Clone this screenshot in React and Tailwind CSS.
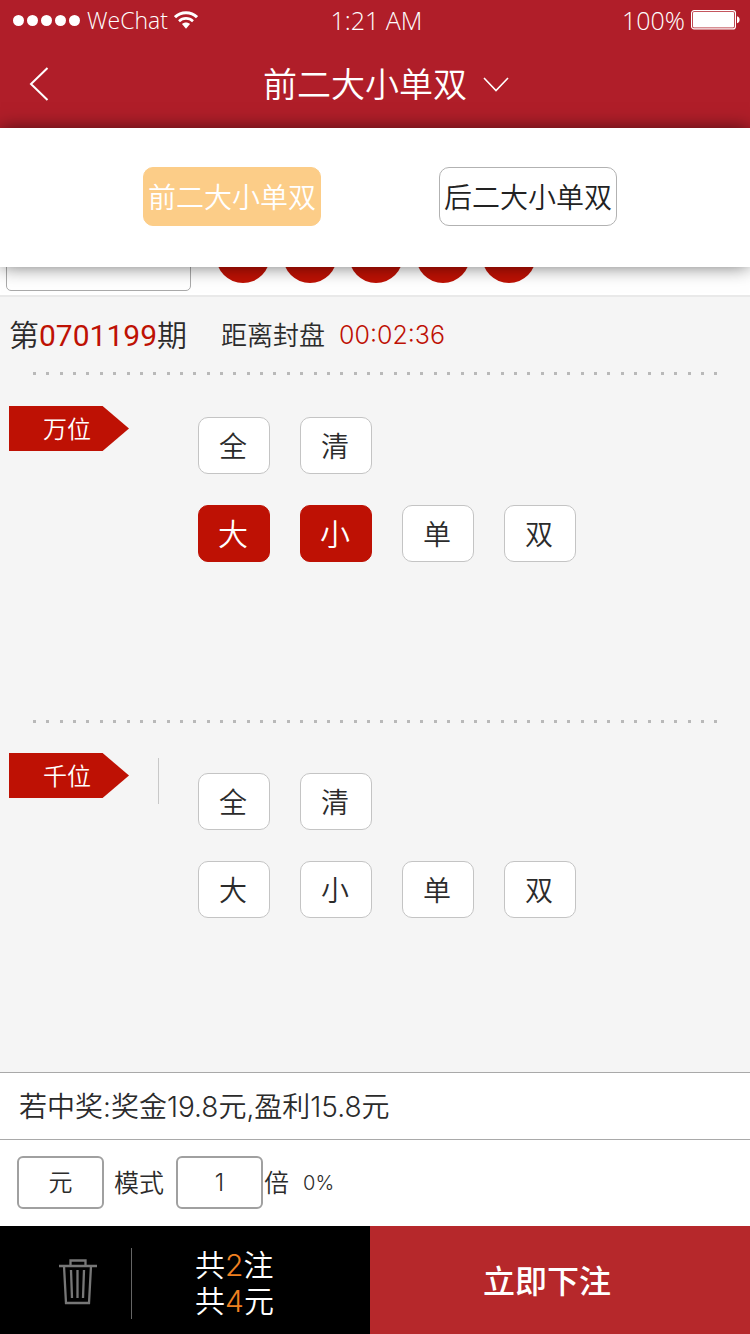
import { useState } from "react";

const SIZES = ["大", "小", "单", "双"];

function StatusBar() {
  return (
    <div className="grid grid-cols-3 items-center h-10 pl-[13px] pr-[10px] text-[25px] leading-[38px] font-['Open_Sans','Noto_Sans',sans-serif]">
      <div className="flex items-center text-[23px]">
        <span className="flex gap-[3px] mr-[7px]">
          {[0, 1, 2, 3, 4].map((i) => (
            <i key={i} className="size-[11px] rounded-full bg-white" />
          ))}
        </span>
        WeChat
        <svg className="ml-[6px] w-6 h-[18px]" viewBox="0 0 24 18" fill="none" stroke="#fff">
          <path d="M1 6.200C7 .2 17 .2 23 6.200" strokeWidth="3" />
          <path d="M5 10.200c4-3.800 10-3.800 14 0" strokeWidth="2.600" />
          <path d="M8 13c2.300-2 5.700-2 8 0l-4 4.800z" fill="#fff" stroke="none" />
        </svg>
      </div>
      <div className="text-center">1:21 AM</div>
      <div className="flex items-center justify-end">
        100%
        <svg className="ml-[6px] w-[49px] h-5" viewBox="0 0 49 20">
          <rect x=".6" y=".6" width="43.800" height="18.300" rx="2.500" fill="none" stroke="#fff" strokeWidth="1.200" />
          <rect x="2" y="2" width="41" height="15.500" rx="1" fill="#fff" />
          <path d="M46 6.200c3.500.8 3.500 6.200 0 7z" fill="#fff" />
        </svg>
      </div>
    </div>
  );
}

function ModeMenu({ value, onChange }) {
  return (
    <div className="absolute inset-x-0 top-full z-10 flex justify-center gap-[118px] bg-white pt-[39px] pb-[41px] pl-[10px] shadow-[0_0_18px_-1px_rgba(0,0,0,0.6)]">
      {["前二大小单双", "后二大小单双"].map((m) => (
        <button
          key={m}
          type="button"
          onClick={() => onChange(m)}
          className={
            "w-[178px] h-[59px] pt-0.5 rounded-[10px] border text-[28px] whitespace-nowrap " +
            (m === value
              ? "bg-[#fccd88] border-[#fccd88] text-white"
              : "bg-white border-[#b2b2b2] text-[#222]")
          }
        >
          {m}
        </button>
      ))}
    </div>
  );
}

function DottedLine() {
  return (
    <div className="flex justify-between pl-[33px] pr-8">
      {Array.from({ length: 52 }, (_, i) => (
        <i key={i} className="size-[3px] bg-[#b9b9b9]" />
      ))}
    </div>
  );
}

function Choice({ children, active, onClick }) {
  return (
    <button
      type="button"
      onClick={onClick}
      aria-pressed={active}
      className={
        "w-[72px] h-[57px] pt-0.5 pr-0.5 rounded-[10px] border " +
        (active
          ? "bg-[#be1104] border-[#be1104] text-white text-[30px]"
          : "bg-white border-[#c4c4c4] text-[#2b2b2b] text-[28px]")
      }
    >
      {children}
    </button>
  );
}

function Position({ name, picked, setPicked, divided, className }) {
  const toggle = (s) =>
    setPicked(picked.includes(s) ? picked.filter((p) => p !== s) : [...picked, s]);
  return (
    <section className={"flex items-start pl-[9px] " + className}>
      <h2 className="w-[120px] h-[45px] pl-[34px] text-2xl leading-[47px] text-white font-[350] bg-[#be1104] [clip-path:polygon(0_0,78%_0,100%_50%,78%_100%,0_100%)]">
        {name}
      </h2>
      <div className={"ml-[29px] mt-[5px] w-px h-[46px] " + (divided ? "bg-[#c8c8c8]" : "")} />
      <div className={"ml-[39px] flex flex-col gap-[31px] " + (divided ? "pt-5" : "pt-[11px]")}>
        <div className="flex gap-[30px]">
          <Choice onClick={() => setPicked(SIZES)}>全</Choice>
          <Choice onClick={() => setPicked([])}>清</Choice>
        </div>
        <div className="flex gap-[30px]">
          {SIZES.map((s) => (
            <Choice key={s} active={picked.includes(s)} onClick={() => toggle(s)}>
              {s}
            </Choice>
          ))}
        </div>
      </div>
    </section>
  );
}

export default function App() {
  const [mode, setMode] = useState("前二大小单双");
  const [first, setFirst] = useState(["大", "小"]);
  const [second, setSecond] = useState([]);

  return (
    <div className="min-h-screen flex flex-col bg-[#f5f5f5] text-[#2b2b2b] font-[350] font-['Inter','Noto_Sans_CJK_SC',sans-serif]">
      <header className="relative bg-[#b01e29] text-white">
        <StatusBar />
        <nav className="flex items-center h-[88px] pr-[26px]">
          <button type="button" aria-label="返回" className="w-12 h-full pl-[29px]">
            <svg className="w-5 h-[34px]" viewBox="0 0 20 34" fill="none" stroke="#fff" strokeWidth="2">
              <path d="M18.500 1 2 17l16.500 16" />
            </svg>
          </button>
          <button type="button" className="flex-1 flex items-center justify-center gap-4 pt-px text-[34px]">
            {mode}
            <svg className="w-[26px] h-[15px]" viewBox="0 0 26 15" fill="none" stroke="#fff" strokeWidth="1.600">
              <path d="m1 1 12 12.500L25 1" />
            </svg>
          </button>
        </nav>
        <ModeMenu value={mode} onChange={setMode} />
      </header>

      <div className="flex items-start h-[169px] pt-[27px] pl-[6px] bg-white border-b-2 border-[#e9e9e9]">
        <div className="w-[185px] h-[136px] rounded-[5px] border border-[#aaa]" />
        <div className="flex justify-between w-[345px] pt-[74px] pl-[25px]">
          {[0, 1, 2, 3, 4].map((i) => (
            <i key={i} className="size-[54px] rounded-full bg-[#be1104]" />
          ))}
        </div>
      </div>

      <main className="flex-1">
        <div className="flex items-center h-[75px] pt-0.5 pl-[9px]">
          <span className="text-[30px]">
            第<span className="font-normal text-[#be1104] font-['Roboto',sans-serif]">0701199</span>期
          </span>
          <span className="ml-[34px] text-[26px]">距离封盘</span>
          <span className="ml-[14px] text-[25px] text-[#be1104]">00:02:36</span>
        </div>
        <DottedLine />
        <Position name="万位" picked={first} setPicked={setFirst} className="pt-[31px] pb-[158px]" />
        <DottedLine />
        <Position name="千位" picked={second} setPicked={setSecond} divided className="pt-[30px] pb-[150px]" />
      </main>

      <div className="h-[67px] pl-[19px] leading-[68px] text-[28px] bg-white border-t border-[#a9a9a9]">
        若中奖:奖金19.8元,盈利15.8元
      </div>
      <div className="flex items-center h-[87px] pb-0.5 pl-[17px] bg-white border-t border-[#a9a9a9] text-[25px]">
        <select
          id="unit"
          className="appearance-none w-[87px] h-[53px] pt-0.5 rounded-[6px] border-2 border-[#a0a0a0] bg-white text-2xl text-center"
        >
          <option>元</option>
          <option>角</option>
          <option>分</option>
        </select>
        <label htmlFor="unit" className="ml-[10px] pt-1">模式</label>
        <input
          id="times"
          defaultValue="1"
          inputMode="numeric"
          className="ml-3 w-[87px] h-[53px] rounded-[6px] border-2 border-[#a0a0a0] text-2xl text-center"
        />
        <label htmlFor="times" className="ml-px pt-1">倍</label>
        <span className="ml-[14px] pt-0.5 text-[20px]">0%</span>
      </div>

      <footer className="flex h-[108px]">
        <div className="flex items-center w-[370px] pt-[6px] bg-black text-white">
          <button type="button" aria-label="清空" className="w-[131px] h-full pb-1 pl-[58px]">
            <svg className="w-10 h-[47px]" viewBox="0 0 40 47" fill="none" stroke="#777" strokeWidth="2.300">
              <path d="M1 8h38M12.500 8V2.500h15V8M6 8l2 37h23l2-37M13 12l1 28M19.500 12v28M26 12l-1 28" />
            </svg>
          </button>
          <div className="w-px h-[71px] bg-[#666]" />
          <p className="ml-[63px] text-[30px] leading-9">
            共<span className="text-[#f08020]">2</span>注
            <br />共<span className="text-[#f08020]">4</span>元
          </p>
        </div>
        <button type="button" className="flex-1 pt-1 pr-[26px] bg-[#b6282b] text-white text-[32px] font-medium">
          立即下注
        </button>
      </footer>
    </div>
  );
}
